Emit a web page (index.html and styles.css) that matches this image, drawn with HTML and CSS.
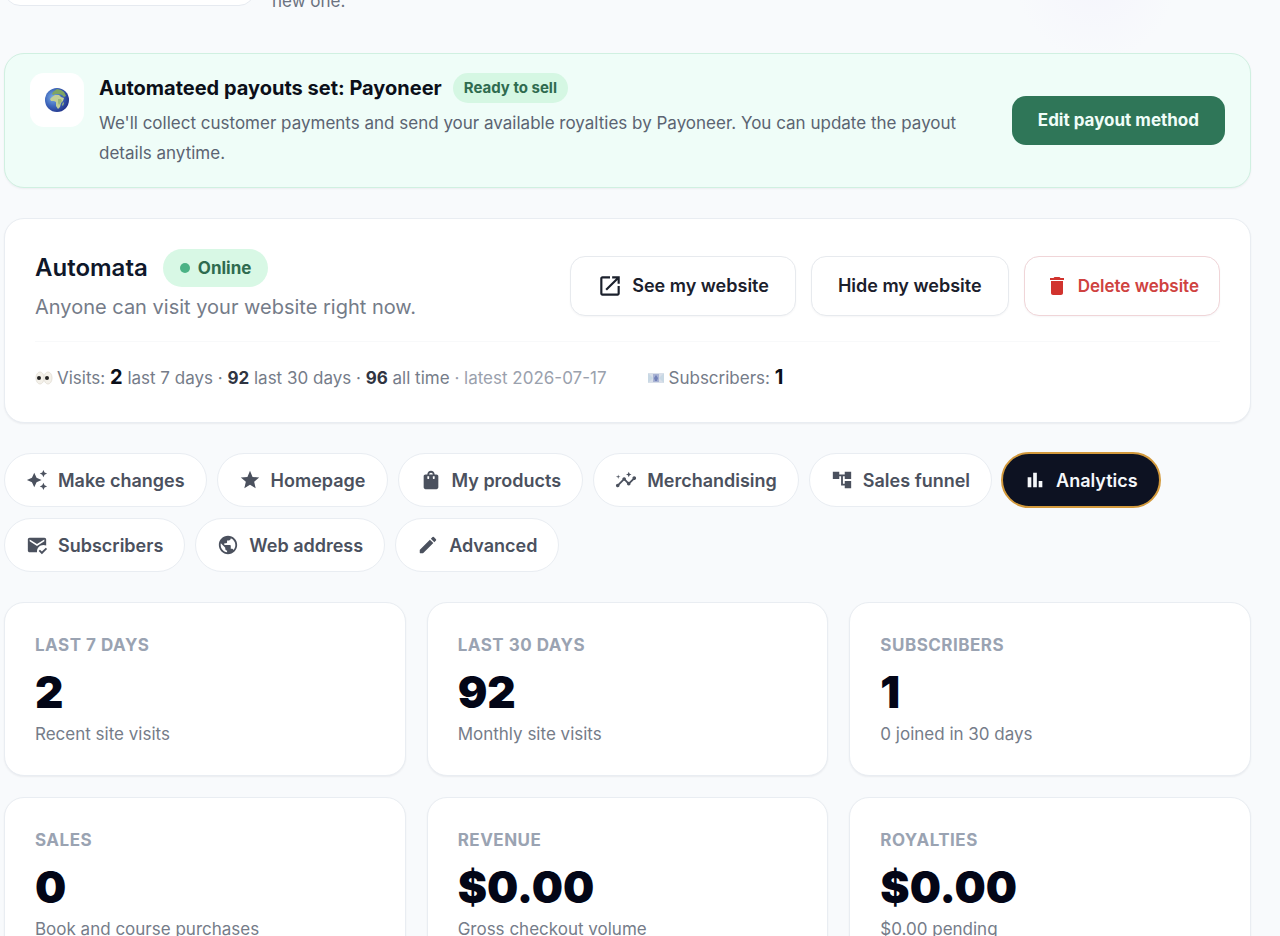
FILE: index.html
```
<!DOCTYPE html>
<html lang="en">
<head>
    <meta charset="UTF-8">
    <meta name="viewport" content="width=device-width, initial-scale=1.0">
    <title>Automata - Analytics</title>
    <link rel="stylesheet" href="styles.css">
</head>
<body>
    <main class="page">
        <div class="intro">
            <div class="intro-card"></div>
            <p class="intro-text">new one.</p>
        </div>

        <section class="payout">
            <div class="payout-icon">
                <svg width="26" height="26" viewBox="0 0 26 26" aria-hidden="true">
                    <defs>
                        <radialGradient id="sea" cx="0.35" cy="0.4" r="0.7">
                            <stop offset="0" stop-color="#7fb2e6"/>
                            <stop offset="0.5" stop-color="#3f68bd"/>
                            <stop offset="1" stop-color="#1f2f86"/>
                        </radialGradient>
                    </defs>
                    <circle cx="13" cy="13" r="12" fill="url(#sea)"/>
                    <path fill="#c3cf96" d="M8 10l3-2 4 0 2 2 3 1-1 3-2 2-1 4-2 2-2-3 0-4-2-1-3 0-1-2z"/>
                    <path fill="#7fa562" d="M9 5l4-3 4 1 3 2 2 4-2 1-2-2-3-1-3 0-3 1-1-1z"/>
                    <path fill="#9db87a" d="M14 12l3 0 1 2-3 4-1-2zM19 15l1 1-1 3-1-1z"/>
                </svg>
            </div>
            <div class="payout-body">
                <div class="payout-head">
                    <h2>Automateed payouts set: Payoneer</h2>
                    <span class="ready">Ready to sell</span>
                </div>
                <p>We'll collect customer payments and send your available royalties by Payoneer. You can update the payout details anytime.</p>
            </div>
            <button type="button" class="edit-payout">Edit payout method</button>
        </section>

        <section class="card site">
            <div class="site-top">
                <div class="site-info">
                    <div class="site-head">
                        <h1>Automata</h1>
                        <span class="online"><i class="dot"></i>Online</span>
                    </div>
                    <p>Anyone can visit your website right now.</p>
                </div>
                <div class="site-actions">
                    <a href="#" class="btn">
                        <svg width="26" height="26" viewBox="0 0 24 24" aria-hidden="true"><path d="M19 19H5V5h7V3H5c-1.110 0-2 .9-2 2v14c0 1.100.890 2 2 2h14c1.100 0 2-.9 2-2v-7h-2zM14 3v2h3.590l-9.830 9.830 1.410 1.410L19 6.410V10h2V3z"/></svg>
                        See my website
                    </a>
                    <button type="button" class="btn">Hide my website</button>
                    <button type="button" class="btn btn-delete">
                        <svg width="24" height="24" viewBox="0 0 24 24" aria-hidden="true"><path d="M6 19c0 1.100.9 2 2 2h8c1.100 0 2-.9 2-2V7H6zM19 4h-3.500l-1-1h-5l-1 1H5v2h14z"/></svg>
                        Delete website
                    </button>
                </div>
            </div>
            <div class="site-stats">
                <span class="stat-line">
                    <svg width="18" height="18" viewBox="0 0 18 18" aria-hidden="true">
                        <ellipse cx="5" cy="9" rx="4" ry="6" fill="#f4f1ea" stroke="#e6e2da"/>
                        <ellipse cx="13" cy="9" rx="4" ry="6" fill="#f4f1ea" stroke="#e6e2da"/>
                        <circle cx="4" cy="9" r="2" fill="#222"/>
                        <circle cx="12" cy="9" r="2" fill="#222"/>
                    </svg>
                    <span>Visits: <b class="main-num">2</b> last 7 days · <b>92</b> last 30 days · <b>96</b> all time <span class="latest">· latest 2026-07-17</span></span>
                </span>
                <span class="stat-line">
                    <svg width="18" height="18" viewBox="0 0 18 18" aria-hidden="true">
                        <rect x="1" y="4" width="16" height="10" rx="1" fill="#d9dfe9"/>
                        <path d="M1 4l5 5-5 5zM17 4l-5 5 5 5z" fill="#c8d8e4"/>
                        <rect x="6" y="5" width="6" height="8" fill="#a9b3d4"/>
                        <path d="M9 6l2 3-1 3H8L7 9z" fill="#7281b8"/>
                    </svg>
                    <span>Subscribers: <b class="main-num">1</b></span>
                </span>
            </div>
        </section>

        <nav class="tabs">
            <button type="button" class="tab">
                <svg viewBox="0 0 24 24" aria-hidden="true"><path d="m19 9 1.250-2.750L23 5l-2.750-1.250L19 1l-1.250 2.750L15 5l2.750 1.250zm-7.500.5L9 4 6.500 9.500 1 12l5.500 2.500L9 20l2.500-5.500L17 12zM19 15l-1.250 2.750L15 19l2.750 1.250L19 23l1.250-2.750L23 19l-2.750-1.250z"/></svg>
                Make changes
            </button>
            <button type="button" class="tab">
                <svg viewBox="0 0 24 24" aria-hidden="true"><path d="M12 17.270 18.180 21l-1.640-7.030L22 9.240l-7.190-.61L12 2 9.190 8.630 2 9.240l5.460 4.730L5.820 21z"/></svg>
                Homepage
            </button>
            <button type="button" class="tab">
                <svg viewBox="0 0 24 24" aria-hidden="true"><path d="M18 6h-2c0-2.210-1.790-4-4-4S8 3.790 8 6H6c-1.100 0-2 .9-2 2v12c0 1.100.9 2 2 2h12c1.100 0 2-.9 2-2V8c0-1.100-.9-2-2-2zm-8 4c0 .55-.45 1-1 1s-1-.45-1-1V8h2v2zm2-6c1.100 0 2 .9 2 2h-4c0-1.100.9-2 2-2zm4 6c0 .55-.45 1-1 1s-1-.45-1-1V8h2v2z"/></svg>
                My products
            </button>
            <button type="button" class="tab">
                <svg viewBox="0 0 24 24" aria-hidden="true"><path d="M21 8c-1.450 0-2.260 1.440-1.930 2.510l-3.550 3.560c-.3-.09-.74-.09-1.040 0l-2.550-2.550C12.270 10.450 11.460 9 10 9c-1.450 0-2.270 1.440-1.930 2.520l-4.560 4.550C2.440 15.740 1 16.550 1 18c0 1.100.9 2 2 2 1.450 0 2.260-1.440 1.930-2.510l4.550-4.560c.3.09.74.09 1.040 0l2.550 2.550C12.730 16.550 13.540 18 15 18c1.450 0 2.270-1.440 1.930-2.520l3.560-3.550c1.070.33 2.510-.48 2.510-1.930 0-1.100-.9-2-2-2zM15 9l.94-2.070L18 6l-2.060-.93L15 3l-.92 2.070L12 6l2.080.93zM3.500 11 4 9l2-.5L4 8l-.5-2L3 8l-2 .5L3 9z"/></svg>
                Merchandising
            </button>
            <button type="button" class="tab">
                <svg viewBox="0 0 24 24" aria-hidden="true"><path d="M22 11V3h-7v3H9V3H2v8h7V8h2v10h4v3h7v-8h-7v3h-2V8h2v3z"/></svg>
                Sales funnel
            </button>
            <button type="button" class="tab active" aria-current="page">
                <svg viewBox="0 0 24 24" aria-hidden="true"><path d="M4 9h4v11H4zm12 4h4v7h-4zm-6-9h4v16h-4z"/></svg>
                Analytics
            </button>
            <button type="button" class="tab">
                <svg viewBox="0 0 24 24" aria-hidden="true"><path d="M12 19c0-3.870 3.130-7 7-7 1.080 0 2.090.25 3 .68V6c0-1.100-.9-2-2-2H4c-1.100 0-2 .9-2 2v12c0 1.100.9 2 2 2h8.080c-.05-.33-.08-.66-.08-1zM4 6l8 5 8-5v2l-8 5-8-5V6zm13.340 16-3.540-3.540 1.410-1.410 2.120 2.120 4.240-4.240L23 16.340 17.340 22z"/></svg>
                Subscribers
            </button>
            <button type="button" class="tab">
                <svg viewBox="0 0 24 24" aria-hidden="true"><path d="M12 2C6.480 2 2 6.480 2 12s4.480 10 10 10 10-4.480 10-10S17.520 2 12 2zm-1 17.930c-3.950-.49-7-3.850-7-7.930 0-.62.08-1.210.21-1.790L9 15v1c0 1.100.9 2 2 2v1.930zm6.900-2.540c-.26-.81-1-1.390-1.900-1.390h-1v-3c0-.55-.45-1-1-1H8v-2h2c.55 0 1-.45 1-1V7h2c1.100 0 2-.9 2-2v-.41c2.930 1.190 5 4.060 5 7.410 0 2.080-.8 3.970-2.100 5.390z"/></svg>
                Web address
            </button>
            <button type="button" class="tab">
                <svg viewBox="0 0 24 24" aria-hidden="true"><path d="M3 17.460v3.040c0 .28.22.5.5.5h3.040c.13 0 .26-.05.35-.15L17.810 9.940l-3.750-3.750L3.150 17.100c-.1.1-.15.22-.15.36M20.710 7.040c.39-.39.39-1.020 0-1.410l-2.340-2.340a1 1 0 0 0-1.410 0l-1.830 1.830 3.750 3.750z"/></svg>
                Advanced
            </button>
        </nav>

        <section class="metrics">
            <div class="card metric">
                <h3>Last 7 days</h3>
                <strong>2</strong>
                <p>Recent site visits</p>
            </div>
            <div class="card metric">
                <h3>Last 30 days</h3>
                <strong>92</strong>
                <p>Monthly site visits</p>
            </div>
            <div class="card metric">
                <h3>Subscribers</h3>
                <strong>1</strong>
                <p>0 joined in 30 days</p>
            </div>
            <div class="card metric">
                <h3>Sales</h3>
                <strong>0</strong>
                <p>Book and course purchases</p>
            </div>
            <div class="card metric">
                <h3>Revenue</h3>
                <strong>$0.00</strong>
                <p>Gross checkout volume</p>
            </div>
            <div class="card metric">
                <h3>Royalties</h3>
                <strong>$0.00</strong>
                <p>$0.00 pending</p>
            </div>
        </section>
    </main>
</body>
</html>
```

FILE: styles.css
```
* {
    box-sizing: border-box;
}
body {
    margin: 0;
    font-family: Inter, "Liberation Sans", sans-serif;
    font-size: 17px;
    color: #0f172a;
    background: radial-gradient(circle at 1096px -20px, #f5f5fc 0, #f8fafc 80px) #f8fafc;
}
h1, h2, h3, p {
    margin: 0;
}
button {
    font-family: inherit;
    cursor: pointer;
}
svg {
    flex: none;
    fill: currentColor;
}
.page {
    padding: 0 29px 30px 4px;
}
.card {
    background: #fff;
    border: 1px solid #e9edf2;
    border-radius: 20px;
    box-shadow: 0 1px 2px rgba(15, 23, 42, 0.06);
}

/* tail of the intro row, cut by the top edge */
.intro {
    display: flex;
    align-items: flex-end;
    gap: 17px;
    height: 13px;
    overflow: hidden;
}
.intro-card {
    flex: none;
    width: 251px;
    height: 40px;
    margin-bottom: 7px;
    background: #fff;
    border: 1px solid #e6eaf0;
    border-radius: 16px;
}
.intro-text {
    line-height: 24px;
    color: #6b7280;
}

/* payout banner */
.payout {
    display: flex;
    align-items: center;
    gap: 15px;
    margin-top: 40px;
    padding: 19px 25px 19px;
    background: #effdf8;
    border: 1px solid #d0f0e1;
    border-radius: 20px;
    box-shadow: 0 1px 2px rgba(15, 23, 42, 0.05);
}
.payout-icon {
    display: flex;
    align-items: center;
    justify-content: center;
    align-self: flex-start;
    flex: none;
    width: 54px;
    height: 54px;
    background: #fff;
    border-radius: 14px;
}
.payout-body {
    flex: 1;
}
.payout-head {
    display: flex;
    align-items: center;
    gap: 11px;
}
.payout-head h2 {
    font-size: 20px;
    font-weight: 700;
    line-height: 30px;
    color: #0b0f19;
}
.ready {
    padding: 0 11px;
    font-size: 15px;
    font-weight: 700;
    line-height: 30px;
    color: #2f6b4f;
    background: #d5f7e3;
    border-radius: 15px;
}
.payout-body p {
    margin-top: 5px;
    line-height: 30px;
    color: #5b6472;
}
.edit-payout {
    flex: none;
    margin-left: 15px;
    padding: 0 26px;
    font-size: 17px;
    font-weight: 700;
    line-height: 49px;
    color: #effdf8;
    background: #2f7658;
    border: 0;
    border-radius: 14px;
}

/* website card */
.site {
    margin-top: 30px;
    padding: 30px;
}
.site-top {
    display: flex;
    align-items: center;
    justify-content: space-between;
    padding-bottom: 19px;
    border-bottom: 1px solid #f8f9fa;
}
.site-head {
    display: flex;
    align-items: center;
    gap: 15px;
}
.site-head h1 {
    font-size: 24px;
    font-weight: 600;
    line-height: 38px;
    color: #0f172a;
}
.online {
    display: flex;
    align-items: center;
    gap: 8px;
    padding: 0 17px;
    font-size: 17px;
    font-weight: 700;
    line-height: 38px;
    color: #2f6b4f;
    background: #d8f8e5;
    border-radius: 19px;
}
.dot {
    width: 10px;
    height: 10px;
    background: #4bb285;
    border-radius: 50%;
}
.site-info p {
    margin-top: 5px;
    font-size: 20px;
    line-height: 30px;
    color: #757c89;
}
.site-actions {
    display: flex;
    gap: 15px;
}
.btn {
    display: flex;
    align-items: center;
    gap: 9px;
    height: 60px;
    padding: 0 26px;
    font-size: 18px;
    font-weight: 600;
    color: #1b202c;
    text-decoration: none;
    background: #fff;
    border: 1px solid #e7eaee;
    border-radius: 15px;
    box-shadow: 0 1px 2px rgba(15, 23, 42, 0.04);
}
.btn-delete {
    padding: 0 20px;
    font-size: 17px;
    color: #cf4240;
    border-color: #f0d5d8;
}
.btn-delete svg {
    fill: #d1332e;
}
.site-stats {
    display: flex;
    gap: 40px;
    padding-top: 21px;
    font-size: 17px;
    line-height: 28px;
    color: #757c89;
}
.stat-line {
    display: flex;
    align-items: center;
    gap: 4px;
}
.site-stats b {
    font-weight: 700;
    color: #2f3441;
}
.site-stats .main-num {
    font-size: 20px;
    color: #0b0f19;
}
.site-stats .latest {
    color: #9aa1ad;
}

/* tabs */
.tabs {
    display: flex;
    flex-wrap: wrap;
    gap: 11px 10px;
    margin-top: 30px;
}
.tab {
    display: flex;
    align-items: center;
    gap: 10px;
    height: 54px;
    padding: 0 21px;
    font-size: 18px;
    font-weight: 600;
    color: #4b515e;
    background: #fff;
    border: 1px solid #e9edf2;
    border-radius: 27px;
}
.tab svg {
    width: 22px;
    height: 22px;
}
.tab.active {
    color: #f5f7fa;
    background: #0d1222;
    border-color: #0d1222;
    outline: 2px solid #d2993c;
    outline-offset: -1px;
}

/* metric cards */
.metrics {
    display: grid;
    grid-template-columns: repeat(3, 1fr);
    gap: 21px;
    margin-top: 30px;
}
.metric {
    padding: 29px 30px 28px;
}
.metric h3 {
    font-size: 17px;
    font-weight: 700;
    line-height: 26px;
    letter-spacing: 0.5px;
    text-transform: uppercase;
    color: #9aa3b2;
}
.metric strong {
    display: block;
    margin-top: 9px;
    font-size: 44px;
    font-weight: 900;
    line-height: 50px;
    color: #030617;
}
.metric p {
    margin-top: 4px;
    font-size: 17px;
    line-height: 26px;
    color: #757c89;
}
```
